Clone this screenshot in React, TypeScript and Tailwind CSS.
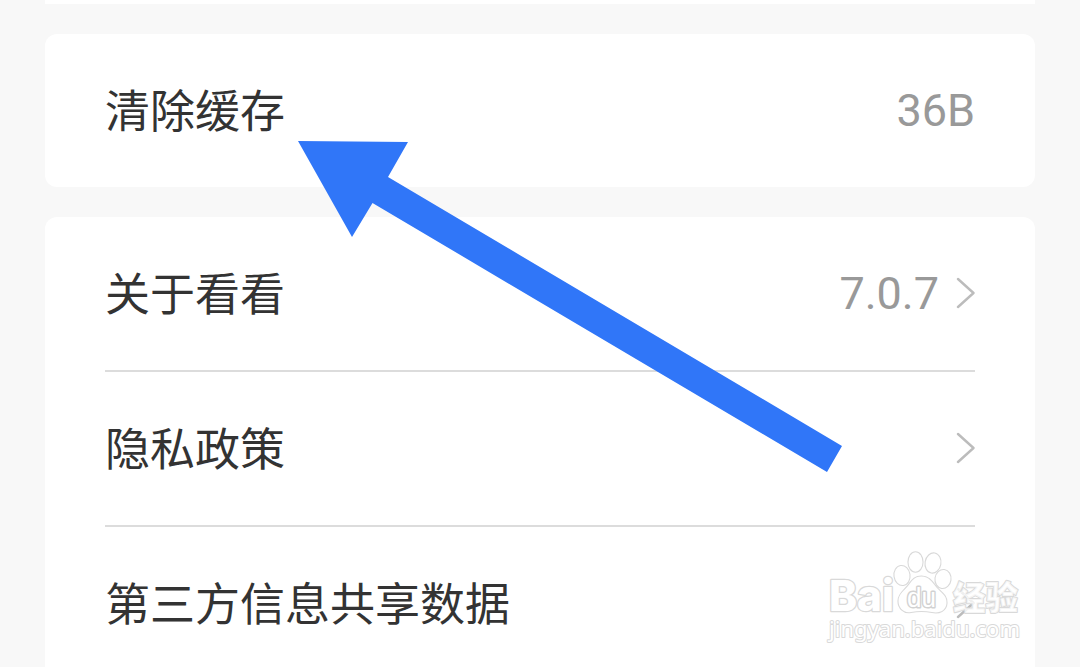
import type { ReactNode } from "react";

interface RowProps {
  label: string;
  value?: string;
  arrow?: boolean;
}

const Chevron = () => (
  <svg className="mb-0.5 h-8 w-[19px] shrink-0" viewBox="0 0 19 32" fill="none">
    <path d="M2 2 L17.5 16 L2 30" stroke="#bcbcbc" strokeWidth={2.4} strokeLinecap="round" strokeLinejoin="round" />
  </svg>
);

const Row = ({ label, value, arrow = false }: RowProps) => (
  <div className="flex h-[153px] items-center justify-between">
    <span className="whitespace-nowrap pb-1 text-[45px] leading-none text-[#333333]">{label}</span>
    <div className="flex items-center gap-[17px]">
      {value && (
        <span className="font-['Roboto',sans-serif] text-[45px] leading-none text-[#999999]">{value}</span>
      )}
      {arrow && <Chevron />}
    </div>
  </div>
);

const Card = ({ children }: { children: ReactNode }) => (
  <section className="rounded-[12px] bg-white px-[60px]">{children}</section>
);

const Divider = () => <div className="h-0.5 bg-[#dcdcdc]" />;

// Pointer drawn across the cards
const Arrow = () => (
  <svg className="pointer-events-none absolute inset-0" width={1080} height={667} viewBox="0 0 1080 667">
    <polygon points="298,141 408,142 388,177 842,446 827,472 372.5,203 352,237" fill="#3076f8" />
  </svg>
);

const Watermark = () => (
  <svg
    className="pointer-events-none absolute left-[820px] top-[545px] [paint-order:stroke]"
    width={210}
    height={105}
    viewBox="0 0 210 105"
    fill="#ffffff"
    stroke="#d9d9d9"
    strokeWidth={2.6}
    strokeLinejoin="round"
  >
    <text x={9} y={66} fontSize={43} fontWeight={800} fontFamily="Inter, sans-serif" textLength={65} lengthAdjust="spacingAndGlyphs">
      Bai
    </text>
    <g strokeWidth={2.2}>
      <ellipse cx={82} cy={30.5} rx={7.5} ry={9.5} transform="rotate(-8 82 30.5)" />
      <ellipse cx={95.5} cy={17} rx={7} ry={9.7} />
      <ellipse cx={113} cy={18} rx={7.4} ry={9.6} transform="rotate(10 113 18)" />
      <ellipse cx={123} cy={34} rx={7.5} ry={9} transform="rotate(8 123 34)" />
      <path d="M101.5 31.5 C109 31.5 112 37 116 42 C120 47 127 50 126.5 58 C126 66 119 68.5 112 67 C105 65.5 98 65.5 91 67 C84 68.5 78.5 63 78.5 56 C78.5 49 84 46 88 41 C92 36 94 31.5 101.5 31.5 Z" />
    </g>
    <text x={87} y={62} fontSize={27} fontWeight={400} strokeWidth={3} stroke="#d2d2d2" fontFamily="Liberation Sans, sans-serif" textLength={29} lengthAdjust="spacingAndGlyphs">
      du
    </text>
    <text x={133} y={64.5} fontSize={33} fontWeight={900} strokeWidth={2} fillOpacity={0.75} fontFamily="Noto Sans CJK SC, sans-serif" textLength={65} lengthAdjust="spacingAndGlyphs">
      经验
    </text>
    <text x={9} y={92} fontSize={22} fontWeight={400} strokeWidth={2} fontFamily="Noto Sans, sans-serif" textLength={191} lengthAdjust="spacingAndGlyphs">
      jingyan.baidu.com
    </text>
  </svg>
);

const App = () => {
  return (
    <main className="relative h-[667px] w-[1080px] overflow-hidden bg-[#f8f8f8] font-['Noto_Sans_CJK_SC',sans-serif]">
      <div className="flex flex-col gap-[30px] px-[45px]">
        <div className="h-1 bg-white" />
        <Card>
          <Row label="清除缓存" value="36B" />
        </Card>
        <Card>
          <Row label="关于看看" value="7.0.7" arrow />
          <Divider />
          <Row label="隐私政策" arrow />
          <Divider />
          <Row label="第三方信息共享数据" arrow />
        </Card>
      </div>
      <Arrow />
      <Watermark />
    </main>
  );
};

export default App;
